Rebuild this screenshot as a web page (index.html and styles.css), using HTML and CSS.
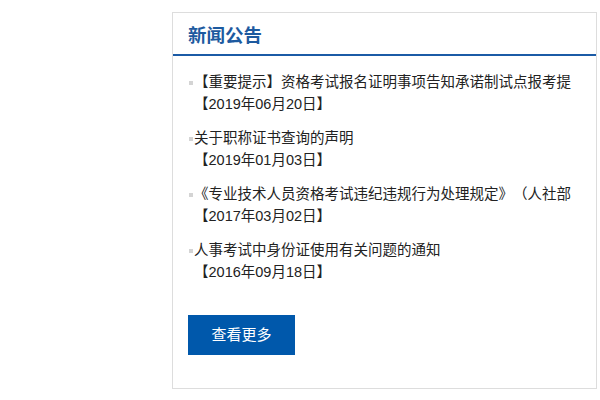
FILE: index.html
```html
<!DOCTYPE html>
<html lang="zh-CN">
<head>
  <meta charset="UTF-8">
  <meta name="viewport" content="width=device-width, initial-scale=1">
  <title>新闻公告</title>
  <link rel="stylesheet" href="styles.css">
</head>
<body>

  <div class="news-box">
    <div class="news-head">
      <h2>新闻公告</h2>
    </div>

    <ul class="news-list">
      <li>
        <a href="#">【重要提示】资格考试报名证明事项告知承诺制试点报考提</a>
        <span class="date">【2019年06月20日】</span>
      </li>
      <li>
        <a href="#">关于职称证书查询的声明</a>
        <span class="date">【2019年01月03日】</span>
      </li>
      <li>
        <a href="#">《专业技术人员资格考试违纪违规行为处理规定》（人社部</a>
        <span class="date">【2017年03月02日】</span>
      </li>
      <li>
        <a href="#">人事考试中身份证使用有关问题的通知</a>
        <span class="date">【2016年09月18日】</span>
      </li>
    </ul>

    <a class="more-btn" href="#">查看更多</a>
  </div>

</body>
</html>
```

FILE: styles.css
```css
body {
  font-family: "Liberation Sans", "Noto Sans CJK SC", sans-serif;
  background: #ffffff;
  margin: 0;
  padding: 12px 0 0 172px;
  color: #222222;
}
.news-box {
  width: 423px;
  height: 375px;
  border: 1px solid #dddddd;
  background: #ffffff;
}
.news-head {
  height: 41px;
  border-bottom: 2px solid #1b5ba6;
  padding-left: 15px;
  display: flex;
  align-items: center;
}
.news-head h2 {
  margin: 0;
  font-size: 18.5px;
  font-weight: bold;
  color: #1d5a9f;
}
.news-list {
  list-style: none;
  margin: 0;
  padding: 15px 10px 0 16px;
  text-spacing-trim: space-all;
}
.news-list li {
  position: relative;
  padding-left: 5px;
  margin-bottom: 12px;
  font-size: 14.5px;
  line-height: 22px;
}
.news-list li::before {
  content: "";
  position: absolute;
  left: 0;
  top: 10px;
  width: 4px;
  height: 4px;
  background: #d4d4d4;
}
.news-list a {
  display: block;
  color: #222222;
  text-decoration: none;
  white-space: nowrap;
}
.news-list .date {
  display: block;
}
.more-btn {
  display: inline-block;
  margin: 20px 0 0 15px;
  width: 107px;
  height: 40px;
  line-height: 40px;
  text-align: center;
  background: #0058ab;
  color: #ffffff;
  font-size: 15px;
  text-decoration: none;
}
```
